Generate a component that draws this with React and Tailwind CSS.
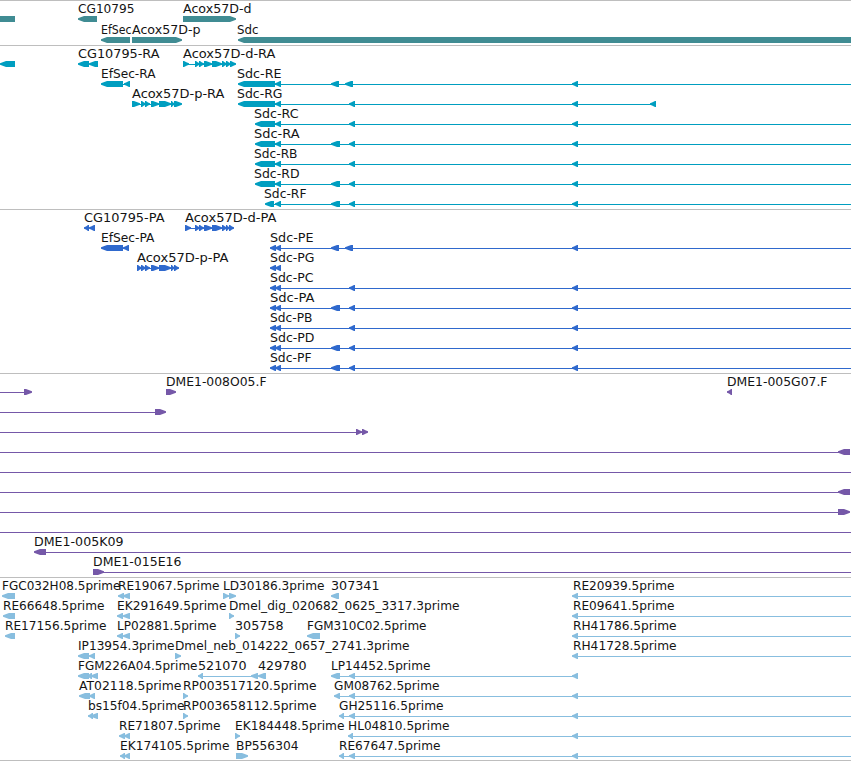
import React from "react";

const W = 851;

// label: [text, x, end]   mark: [kind, x, end]
// kinds: "<" reverse exon, ">" forward exon, "=" clipped block, "-" intron line
const GENES = [
  {
    labels: [["CG10795", 78, 134], ["Acox57D-d", 183, 251]],
    marks: [["=", 0, 15], ["<", 78, 97], [">", 183, 236]],
  },
  {
    labels: [["EfSec", 101, 131], ["Acox57D-p", 132, 200], ["Sdc", 237, 258]],
    marks: [["<", 101, 130], [">", 132, 182], ["<", 238, W]],
  },
];

const TRANSCRIPTS = [
  {
    labels: [["CG10795-RA", 78, 159], ["Acox57D-d-RA", 183, 275]],
    marks: [
      ["<", 0, 15], ["<", 78, 89], ["<", 89, 98], ["-", 183, 234],
      [">", 183, 189], [">", 195, 200], [">", 199, 204], [">", 204, 212], [">", 212, 222], [">", 222, 227], [">", 226, 231], [">", 230, 236],
    ],
  },
  {
    labels: [["EfSec-RA", 101, 155], ["Sdc-RE", 237, 281]],
    marks: [
      ["<", 101, 123], ["-", 122, 128], ["<", 124, 130],
      ["<", 238, 275], ["-", 275, W], ["<", 275, 281], ["<", 331, 339], ["<", 345, 353], ["<", 572, 578],
    ],
  },
  {
    labels: [["Acox57D-p-RA", 132, 224], ["Sdc-RG", 237, 282]],
    marks: [
      ["-", 132, 180], [">", 132, 140], [">", 141, 146], [">", 145, 150], [">", 151, 159], [">", 159, 171], [">", 171, 175], [">", 174, 182],
      ["<", 238, 275], ["-", 275, 655], ["<", 275, 281], ["<", 349, 355], ["<", 572, 578], ["<", 650, 656],
    ],
  },
  {
    labels: [["Sdc-RC", 254, 298]],
    marks: [["<", 255, 275], ["-", 275, W], ["<", 275, 281], ["<", 349, 355], ["<", 572, 578]],
  },
  {
    labels: [["Sdc-RA", 254, 299]],
    marks: [["<", 255, 275], ["-", 275, W], ["<", 275, 281], ["<", 331, 340], ["<", 349, 355], ["<", 572, 578]],
  },
  {
    labels: [["Sdc-RB", 254, 297]],
    marks: [["<", 255, 275], ["-", 275, W], ["<", 275, 281], ["<", 349, 355], ["<", 572, 578]],
  },
  {
    labels: [["Sdc-RD", 254, 299]],
    marks: [["<", 255, 275], ["-", 275, W], ["<", 275, 281], ["<", 331, 340], ["<", 349, 355], ["<", 572, 578]],
  },
  {
    labels: [["Sdc-RF", 264, 306]],
    marks: [["<", 265, 274], ["-", 274, W], ["<", 275, 281], ["<", 331, 340], ["<", 349, 355], ["<", 572, 578]],
  },
];

const PROTEINS = [
  {
    labels: [["CG10795-PA", 84, 164], ["Acox57D-d-PA", 185, 276]],
    marks: [
      ["<", 84, 89], ["<", 89, 95], ["-", 185, 232],
      [">", 185, 191], [">", 195, 200], [">", 199, 204], [">", 204, 212], [">", 212, 222], [">", 222, 227], [">", 226, 230], [">", 229, 234],
    ],
  },
  {
    labels: [["EfSec-PA", 101, 154], ["Sdc-PE", 270, 313]],
    marks: [
      ["<", 101, 123], ["-", 122, 128], ["<", 123, 129],
      ["<", 270, 276], ["-", 275, W], ["<", 275, 281], ["<", 331, 339], ["<", 345, 353], ["<", 572, 578],
    ],
  },
  {
    labels: [["Acox57D-p-PA", 137, 228], ["Sdc-PG", 270, 314]],
    marks: [
      ["-", 137, 178], [">", 137, 142], [">", 141, 146], [">", 145, 150], [">", 151, 159], [">", 159, 171], [">", 171, 175], [">", 174, 179],
      ["<", 270, 276], ["<", 275, 281],
    ],
  },
  {
    labels: [["Sdc-PC", 270, 313]],
    marks: [["<", 270, 276], ["-", 275, W], ["<", 275, 281], ["<", 349, 355], ["<", 572, 578]],
  },
  {
    labels: [["Sdc-PA", 270, 314]],
    marks: [["<", 270, 276], ["-", 275, W], ["<", 275, 281], ["<", 331, 340], ["<", 349, 355], ["<", 572, 578]],
  },
  {
    labels: [["Sdc-PB", 270, 312]],
    marks: [["<", 270, 276], ["-", 275, W], ["<", 275, 281], ["<", 349, 355], ["<", 572, 578]],
  },
  {
    labels: [["Sdc-PD", 270, 314]],
    marks: [["<", 270, 276], ["-", 275, W], ["<", 275, 281], ["<", 331, 340], ["<", 349, 355], ["<", 572, 578]],
  },
  {
    labels: [["Sdc-PF", 270, 311]],
    marks: [["<", 270, 276], ["-", 275, W], ["<", 275, 281], ["<", 331, 340], ["<", 349, 355], ["<", 572, 578]],
  },
];

const CLONES = [
  {
    labels: [["DME1-008O05.F", 166, 266], ["DME1-005G07.F", 727, 827]],
    marks: [["-", 0, 24], [">", 24, 32], [">", 166, 176], ["<", 727, 732]],
  },
  { marks: [["-", 0, 155], [">", 155, 166]] },
  { marks: [["-", 0, 364], [">", 356, 362], [">", 362, 368]] },
  { marks: [["-", 0, 841], ["<", 838, 850]] },
  { marks: [["-", 0, W]] },
  { marks: [["-", 0, 841], ["<", 838, 850]] },
  { marks: [["-", 0, 838], [">", 838, 850]] },
  { marks: [["-", 0, W]] },
  { labels: [["DME1-005K09", 34, 123]], marks: [["<", 34, 46], ["-", 46, W]] },
  { labels: [["DME1-015E16", 93, 181]], marks: [[">", 93, 104], ["-", 100, W]] },
];

const ESTS = [
  {
    labels: [["FGC032H08.5prime", 2, 120], ["RE19067.5prime", 118, 219], ["LD30186.3prime", 223, 324], ["307341", 331, 379], ["RE20939.5prime", 573, 674]],
    marks: [["<", 2, 15], ["<", 118, 124], ["<", 123, 130], [">", 223, 229], [">", 229, 236], ["<", 331, 339], ["<", 572, 578], ["-", 578, W]],
  },
  {
    labels: [["RE66648.5prime", 3, 104], ["EK291649.5prime", 117, 226], ["Dmel_dig_020682_0625_3317.3prime", 229, 459], ["RE09641.5prime", 573, 674]],
    marks: [["<", 3, 15], ["<", 117, 123], ["<", 123, 130], [">", 229, 234], ["<", 572, 578], ["-", 578, W]],
  },
  {
    labels: [["RE17156.5prime", 5, 106], ["LP02881.5prime", 117, 216], ["305758", 235, 283], ["FGM310C02.5prime", 307, 426], ["RH41786.5prime", 573, 676]],
    marks: [["<", 5, 15], ["<", 117, 123], ["<", 123, 130], [">", 235, 240], ["<", 307, 320], ["<", 572, 578], ["-", 578, W]],
  },
  {
    labels: [["IP13954.3prime", 78, 174], ["Dmel_neb_014222_0657_2741.3prime", 175, 409], ["RH41728.5prime", 573, 676]],
    marks: [["<", 78, 89], ["<", 89, 95], [">", 175, 181], ["<", 572, 578], ["-", 578, W]],
  },
  {
    labels: [["FGM226A04.5prime", 78, 197], ["521070", 198, 246], ["429780", 258, 306], ["LP14452.5prime", 331, 430]],
    marks: [
      ["<", 78, 89], ["<", 87, 92], ["<", 91, 98], ["<", 198, 203], ["-", 203, 255], ["<", 251, 258], ["<", 258, 266],
      ["<", 331, 340], ["-", 340, 574], ["<", 349, 355], ["<", 572, 578],
    ],
  },
  {
    labels: [["AT02118.5prime", 79, 181], ["RP003517120.5prime", 183, 316], ["GM08762.5prime", 334, 439]],
    marks: [["<", 79, 90], ["<", 89, 95], [">", 183, 188], ["<", 334, 340], ["-", 340, W], ["<", 349, 355], ["<", 572, 578]],
  },
  {
    labels: [["bs15f04.5prime", 88, 184], ["RP003658112.5prime", 183, 316], ["GH25116.5prime", 339, 443]],
    marks: [["<", 88, 93], ["<", 91, 98], [">", 183, 188], ["<", 339, 344], ["-", 344, W], ["<", 349, 355], ["<", 572, 578]],
  },
  {
    labels: [["RE71807.5prime", 119, 220], ["EK184448.5prime", 235, 344], ["HL04810.5prime", 348, 449]],
    marks: [["<", 119, 125], ["<", 124, 130], [">", 235, 240], ["<", 348, 353], ["-", 353, W], ["<", 572, 578]],
  },
  {
    labels: [["EK174105.5prime", 120, 229], ["BP556304", 236, 298], ["RE67647.5prime", 339, 440]],
    marks: [["<", 120, 125], ["<", 124, 130], [">", 236, 248], ["<", 339, 344], ["-", 344, W], ["<", 349, 355], ["<", 572, 578]],
  },
];

// Arrow block, 6px high, with a blunt 2px tip
function Mark({ kind, x, end }) {
  if (kind === "-") return <rect x={x} y="18" width={end - x} height="1" />;
  if (kind === "=") return <rect x={x} y="15" width={end - x} height="6" />;
  const w = end - x;
  const t = w < 8 ? w - 1 : 6;
  if (kind === "<") {
    return <path d={`M${end} 15H${x + t}L${x + 2} 16.5L${x} 17.3V18.7L${x + 2} 19.5L${x + t} 21H${end}Z`} />;
  }
  return <path d={`M${x} 15H${end - t}L${end - 2} 16.5L${end} 17.3V18.7L${end - 2} 19.5L${end - t} 21H${x}Z`} />;
}

function Row({ labels = [], marks, height = "h-5" }) {
  return (
    <svg className={`block w-[851px] shrink-0 overflow-visible ${height}`}>
      <g fill="currentColor">
        {marks.map(([kind, x, end], i) => (
          <Mark key={i} kind={kind} x={x} end={end} />
        ))}
      </g>
      {labels.map(([text, x, end]) => (
        <text
          key={text}
          x={x}
          y="12"
          textLength={end - x + 0.5}
          lengthAdjust="spacingAndGlyphs"
          className="fill-[#141414] text-[12px]"
        >
          {text}
        </text>
      ))}
    </svg>
  );
}

function Track({ rows, className, rowHeight }) {
  return (
    <section className={`flex flex-col border-t border-[#bebebe] ${className}`}>
      {rows.map((row, i) => (
        <Row key={i} {...row} height={rowHeight} />
      ))}
    </section>
  );
}

export default function App() {
  return (
    <main className="flex h-[761px] w-[851px] flex-col overflow-hidden bg-white font-['DejaVu_Sans',sans-serif]">
      <Track rows={GENES} className="pb-0.5 text-[#408c93]" rowHeight="h-[21px]" />
      <Track rows={TRANSCRIPTS} className="pb-[3px] text-[#009ec0]" />
      <Track rows={PROTEINS} className="pb-[3px] text-[#2f69cd]" />
      <Track rows={CLONES} className="pb-[3px] text-[#7558a8]" />
      <Track rows={ESTS} className="border-b pb-0.5 text-[#88bedf]" />
    </main>
  );
}
